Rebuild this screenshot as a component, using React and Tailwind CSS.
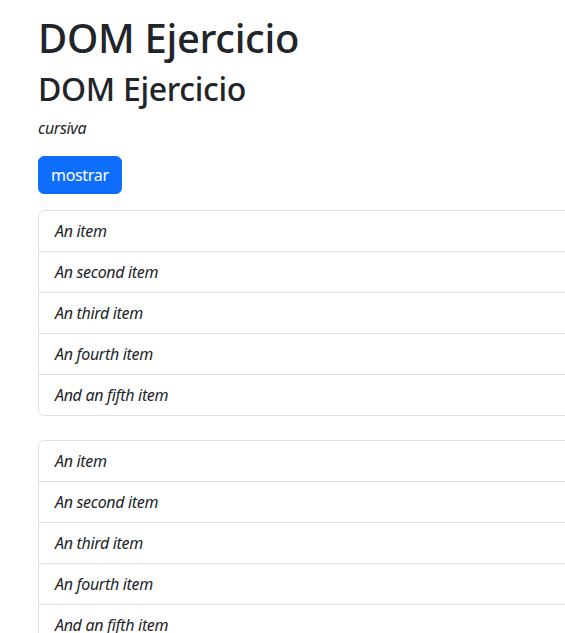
export default function App() {
  const items = ["An item", "An second item", "An third item", "An fourth item", "And an fifth item"];
  const List = () => (
    <ul className="w-[600px] border border-[#dee2e6] rounded-md mb-6">
      {items.map((t, i) => (
        <li key={i} className={"px-4 py-2 leading-6 italic " + (i > 0 ? "border-t border-[#dee2e6]" : "")}>{t}</li>
      ))}
    </ul>
  );
  return (
    <div className="w-[565px] h-[633px] overflow-hidden bg-white text-[#212529] text-base tracking-[-0.02em]" style={{ fontFamily: '"Noto Sans", "Open Sans", sans-serif' }}>
      <div className="pl-[38px] pt-[14px]">
        <h1 className="text-[40px] leading-[48px] font-medium mb-2">DOM Ejercicio</h1>
        <h2 className="text-[32px] leading-[38px] font-medium mb-2">DOM Ejercicio</h2>
        <p className="italic leading-6 mb-4">cursiva</p>
        <button className="bg-[#0d6efd] border border-[#0d6efd] text-white rounded-md px-3 py-1.5 leading-6 mb-4">mostrar</button>
        <List />
        <List />
      </div>
    </div>
  );
}
